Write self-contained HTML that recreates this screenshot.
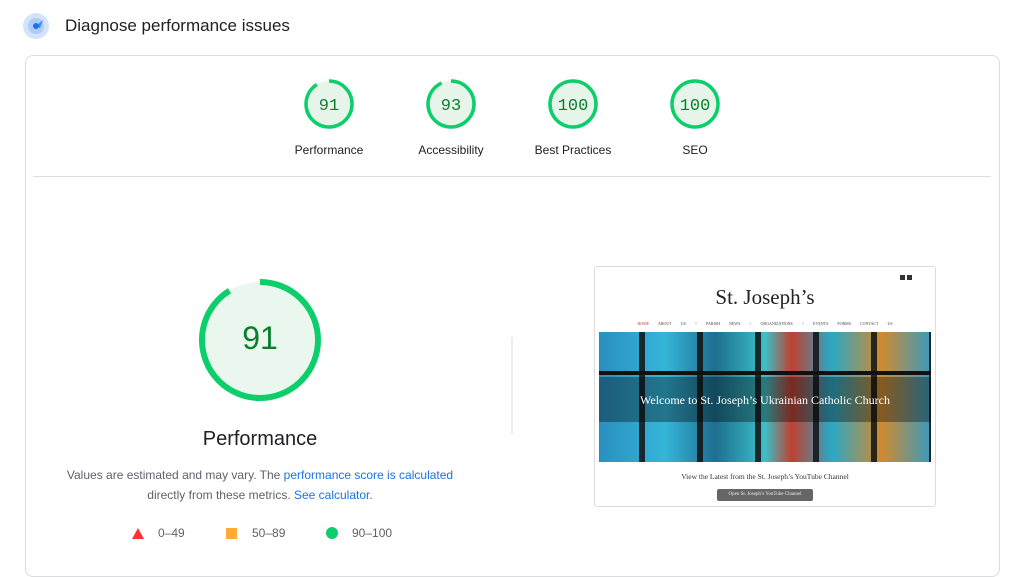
<!DOCTYPE html><html><head><style>
body{margin:0;width:1024px;height:561px;background:#fff;font-family:"Liberation Sans",sans-serif;position:relative;overflow:hidden}
.a{position:absolute}
.lbl{font-size:12px;color:#202124;text-align:center;width:120px}
</style></head><body>
<svg class="a" style="left:22px;top:12px" width="28" height="28"><circle cx="14" cy="14" r="13" fill="#d2e3fc"/><circle cx="14" cy="14" r="8" fill="#aecbfa"/><path d="M14 14 L21 8 L18 16Z" fill="#4285f4"/><circle cx="14" cy="14" r="3" fill="#1a73e8"/></svg>
<div class="a" style="left:65px;top:16px;font-size:17px;color:#202124">Diagnose performance issues</div>
<div class="a" style="left:25px;top:55px;width:973px;height:520px;border:1px solid #dadce0;border-radius:8px"></div>
<div class="a" style="left:33px;top:176px;width:958px;height:1px;background:#dadce0"></div>
<svg class="a" style="left:0;top:0" width="1024" height="561">
<g fill="#e6f4ea" stroke="#0cce6b" stroke-width="3.5">
<circle cx="329" cy="104" r="23" stroke-dasharray="131.5 200" transform="rotate(-90 329 104)"/>
<circle cx="451" cy="104" r="23" stroke-dasharray="134.5 200" transform="rotate(-90 451 104)"/>
<circle cx="573" cy="104" r="23"/>
<circle cx="695" cy="104" r="23"/>
<circle cx="260" cy="340" r="58" stroke-width="6" stroke-dasharray="332 400" transform="rotate(-90 260 340)" fill="#eaf7ee"/>
</g>
<g font-family="Liberation Mono,monospace" fill="#0a7f2e" text-anchor="middle">
<text x="329" y="110" font-size="17">91</text><text x="451" y="110" font-size="17">93</text><text x="573" y="110" font-size="17">100</text><text x="695" y="110" font-size="17">100</text>
<text x="260" y="349" font-size="32" font-family="Liberation Sans,sans-serif">91</text>
</g>
<line x1="512" y1="337" x2="512" y2="434" stroke="#dadce0"/>
<path d="M132 539 L138 528 L144 539Z" fill="#ff3333"/>
<rect x="226" y="528" width="11" height="11" fill="#ffaa33"/>
<circle cx="332" cy="533" r="6" fill="#0cce6b"/>
</svg>
<div class="a lbl" style="left:269px;top:143px">Performance</div>
<div class="a lbl" style="left:391px;top:143px">Accessibility</div>
<div class="a lbl" style="left:513px;top:143px">Best Practices</div>
<div class="a lbl" style="left:635px;top:143px">SEO</div>
<div class="a" style="left:60px;top:428px;width:400px;text-align:center;font-size:20px;color:#202124">Performance</div>
<div class="a" style="left:40px;top:465px;width:440px;text-align:center;font-size:12px;line-height:20px;color:#5f6368">Values are estimated and may vary. The <span style="color:#1a73e8">performance score is calculated</span><br>directly from these metrics. <span style="color:#1a73e8">See calculator.</span></div>
<div class="a" style="left:158px;top:526px;font-size:12px;color:#5f6368">0–49</div>
<div class="a" style="left:252px;top:526px;font-size:12px;color:#5f6368">50–89</div>
<div class="a" style="left:352px;top:526px;font-size:12px;color:#5f6368">90–100</div>
<div class="a" style="left:594px;top:266px;width:340px;height:239px;border:1px solid #dadce0;border-radius:3px;background:#fff;overflow:hidden;font-family:'Liberation Serif',serif">
<div class="a" style="left:305px;top:8px;width:5px;height:5px;background:#333"></div><div class="a" style="left:312px;top:8px;width:5px;height:5px;background:#333"></div>
<div class="a" style="left:0;top:18px;width:340px;text-align:center;font-size:21px;color:#222">St. Joseph’s</div>
<div class="a" style="left:0;top:54px;width:340px;text-align:center;font-size:4px;color:#444;white-space:nowrap;word-spacing:8px"><span style="color:#c33">HOME</span> ABOUT&nbsp;US&nbsp;˅ PARISH&nbsp;NEWS&nbsp;˅ ORGANIZATIONS&nbsp;˅ EVENTS FORMS CONTACT&nbsp;US</div>
<div class="a" style="left:4px;top:65px;width:332px;height:130px;background:linear-gradient(90deg,#2a8fc0,#35b5d8 20%,#1d6f8f 35%,#3cc0c8 50%,#c04030 58%,#2aa8c8 70%,#d08a30 85%,#3a9ac0)"></div>
<div class="a" style="left:4px;top:65px;width:332px;height:130px;background:repeating-linear-gradient(90deg,transparent 0 40px,#111 40px 46px,transparent 46px 58px);opacity:.85"></div>
<div class="a" style="left:4px;top:104px;width:332px;height:4px;background:#111"></div>
<div class="a" style="left:4px;top:110px;width:332px;height:45px;background:rgba(0,0,0,.35)"></div>
<div class="a" style="left:4px;top:126px;width:332px;text-align:center;font-size:12px;color:#fff">Welcome to St. Joseph’s Ukrainian Catholic Church</div>
<div class="a" style="left:0;top:205px;width:340px;text-align:center;font-size:7.5px;color:#333">View the Latest from the St. Joseph’s YouTube Channel</div>
<div class="a" style="left:122px;top:222px;width:96px;height:12px;background:#666;color:#eee;font-size:5px;line-height:12px;text-align:center;border-radius:2px">Open St. Joseph’s YouTube Channel</div>
</div>
</body></html>
